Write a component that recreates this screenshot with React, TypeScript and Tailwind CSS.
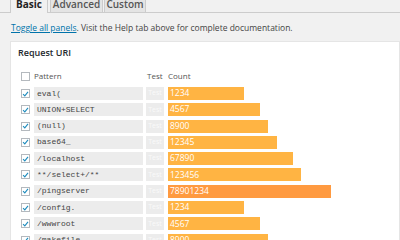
import React from "react";

const rows = [
  { pattern: "eval(", count: "1234", width: 76 },
  { pattern: "UNION+SELECT", count: "4567", width: 92 },
  { pattern: "(null)", count: "8900", width: 100 },
  { pattern: "base64_", count: "12345", width: 109 },
  { pattern: "/localhost", count: "67890", width: 125 },
  { pattern: "**/select+/**", count: "123456", width: 133 },
  { pattern: "/pingserver", count: "78901234", width: 163, hot: true },
  { pattern: "/config.", count: "1234", width: 76 },
  { pattern: "/wwwroot", count: "4567", width: 92 },
  { pattern: "/makefile", count: "8900", width: 100 },
];

function Check({ checked }: { checked?: boolean }) {
  return (
    <span className="flex h-[9px] w-[9px] shrink-0 items-center justify-center border border-[#b4b9be] bg-white">
      {checked && (
        <svg viewBox="0 0 10 10" className="h-[8px] w-[8px]">
          <path d="M1.5 5.2 L4 7.6 L8.6 2" fill="none" stroke="#1e8cbe" strokeWidth="1.6" />
        </svg>
      )}
    </span>
  );
}

export default function App() {
  return (
    <div className="h-[240px] w-[400px] overflow-hidden bg-[#f1f1f1] font-['Open_Sans','Liberation_Sans',sans-serif] text-[#444]">
      {/* Tabs, top edge cut off by the crop */}
      <div className="flex h-[13px] items-end border-b border-[#ccc] pl-[10px] text-[10px] leading-none">
        <div className="-mb-px flex h-[14px] w-[38px] items-end justify-center border-x border-[#ccc] bg-[#f1f1f1] pb-[4px] font-bold text-[#222]">
          Basic
        </div>
        <div className="ml-[2px] flex h-[13px] w-[53px] items-end justify-center border-x border-[#ccc] bg-[#e4e4e4] pb-[3px] font-semibold text-[#555]">
          Advanced
        </div>
        <div className="ml-[1px] flex h-[13px] w-[42px] items-end justify-center border-x border-[#ccc] bg-[#e4e4e4] pb-[3px] font-semibold text-[#555]">
          Custom
        </div>
      </div>

      {/* Intro */}
      <p className="mt-[10px] pl-[11px] text-[8.5px] leading-[10px] text-[#444]">
        <span className="text-[#0073aa] underline">Toggle all panels</span>. Visit the Help tab
        above for complete documentation.
      </p>

      {/* Panel */}
      <div className="ml-[10px] mt-[8px] border border-[#e5e5e5] bg-white pl-[7px] pt-[5px]">
        <div className="h-[12px] text-[9px] font-semibold leading-[12px] text-[#23282d]">Request URI</div>

        <div className="mt-[12px] flex h-[10px] items-center pl-[3px] text-[8px] text-[#555]">
          <Check />
          <span className="ml-[4px] w-[113px]">Pattern</span>
          <span className="w-[21px]">Test</span>
          <span>Count</span>
        </div>

        <div className="mt-[6px] flex flex-col gap-[3.3px]">
          {rows.map((r) => (
            <div key={r.pattern} className="flex h-[13px] items-center pl-[3px]">
              <Check checked />
              <div className="ml-[4px] flex h-[13px] w-[109px] items-center bg-[#ececec] pl-[3px] font-['Liberation_Mono',monospace] text-[8px] text-[#444]">
                {r.pattern}
              </div>
              <div className="ml-[3px] flex h-[13px] w-[18px] items-center justify-center bg-[#ececec] text-[7px] text-[#fafafa]">
                Test
              </div>
              <div
                className={
                  "ml-[4px] flex h-[13px] items-center pl-[2px] text-[8.5px] text-white " +
                  (r.hot ? "bg-[#ff9a40]" : "bg-[#ffb443]")
                }
                style={{ width: r.width }}
              >
                {r.count}
              </div>
            </div>
          ))}
        </div>
      </div>
    </div>
  );
}
